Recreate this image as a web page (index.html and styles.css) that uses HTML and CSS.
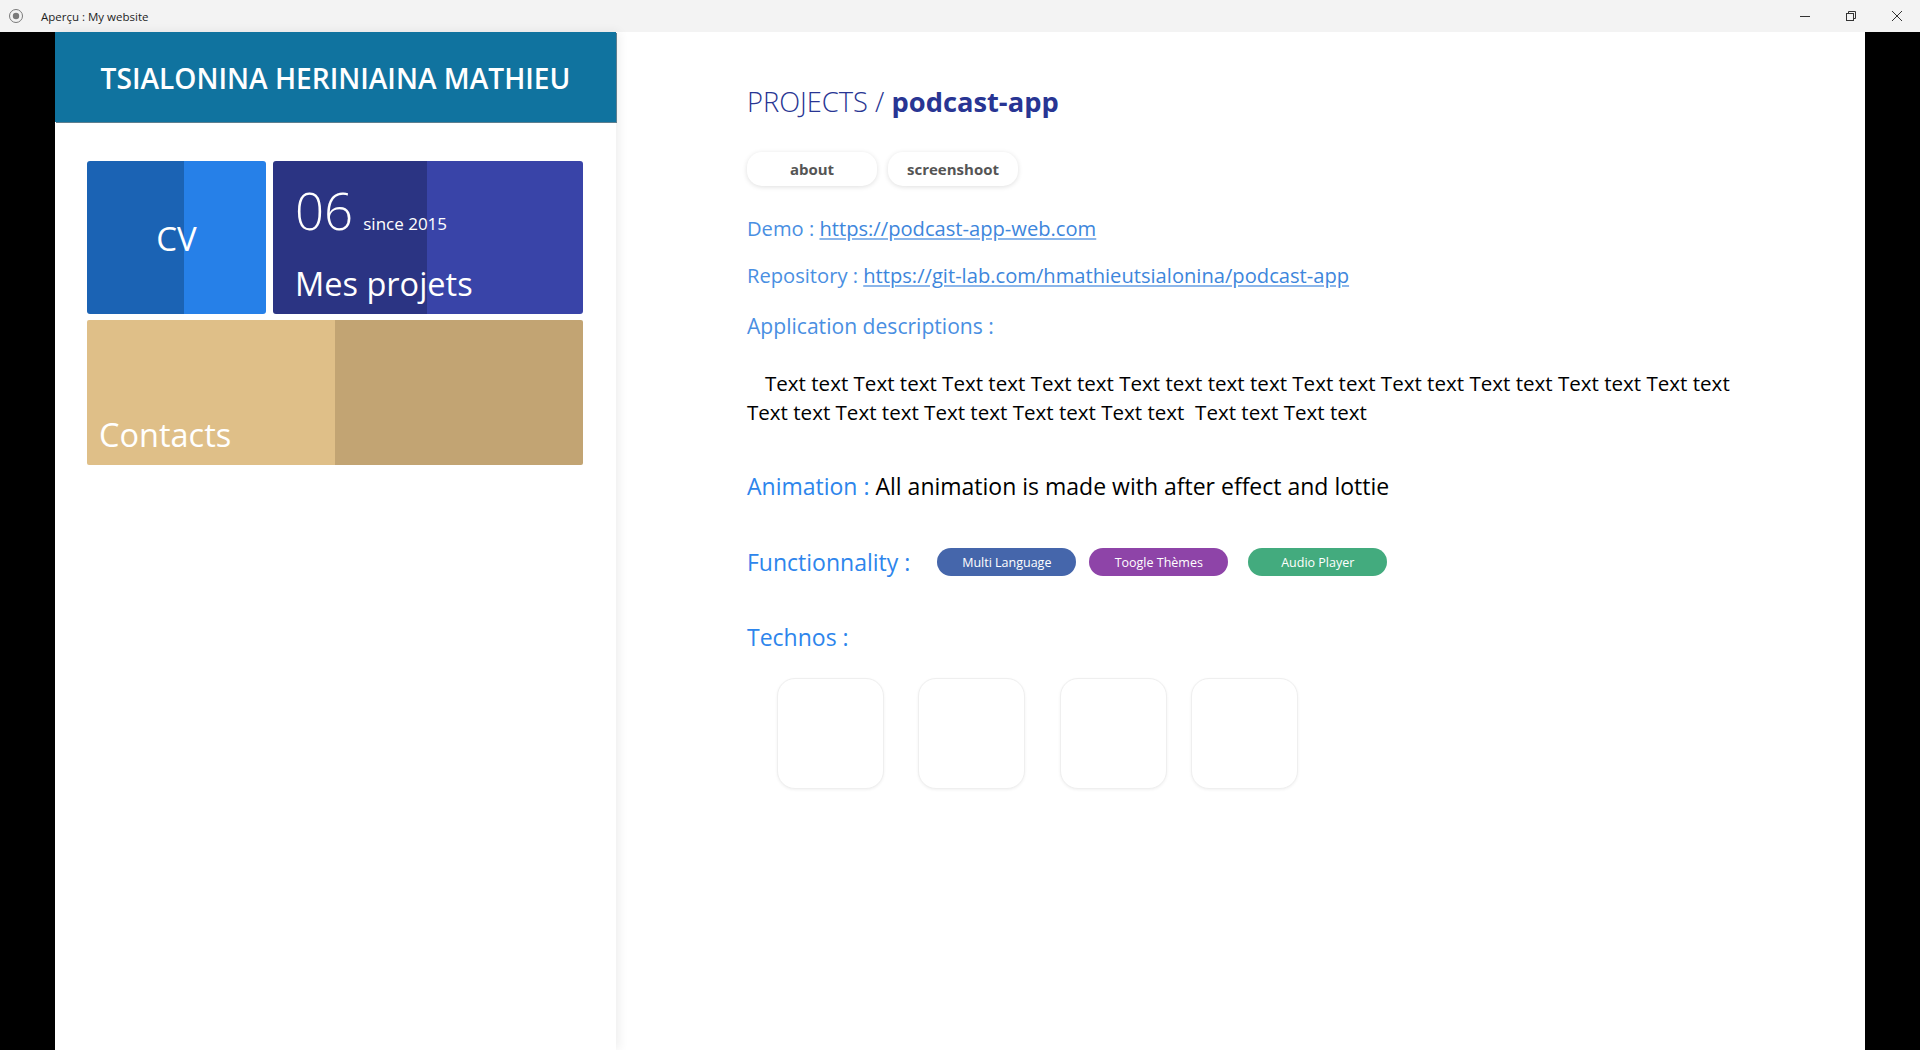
FILE: index.html
```html
<!DOCTYPE html>
<html lang="fr">
<head>
<meta charset="utf-8">
<title>Aperçu : My website</title>
<link rel="stylesheet" href="styles.css">
</head>
<body>
<div class="titlebar">
  <svg class="tb-icon" width="16" height="16" viewBox="0 0 16 16"><circle cx="8" cy="8" r="6.5" fill="none" stroke="#7a7a7a" stroke-width="1"/><circle cx="8" cy="8" r="3.2" fill="#7a7a7a"/></svg>
  <span class="tb-title">Aperçu : My website</span>
  <div class="tb-controls">
    <div class="tb-btn"><svg width="10" height="10" viewBox="0 0 10 10"><path d="M0 5.5H10" stroke="#333" stroke-width="1"/></svg></div>
    <div class="tb-btn"><svg width="10" height="10" viewBox="0 0 10 10"><rect x="0.5" y="2.5" width="7" height="7" fill="none" stroke="#333" stroke-width="1"/><path d="M2.5 2.5V0.5H9.5V7.5H7.5" fill="none" stroke="#333" stroke-width="1"/></svg></div>
    <div class="tb-btn"><svg width="10" height="10" viewBox="0 0 10 10"><path d="M0 0L10 10M10 0L0 10" stroke="#333" stroke-width="1"/></svg></div>
  </div>
</div>
<div class="frame">
  <aside class="sidebar">
    <header class="sb-header"><h1>TSIALONINA HERINIAINA MATHIEU</h1></header>
    <div class="tiles">
      <div class="tile tile-cv"><span>CV</span></div>
      <div class="tile tile-projects">
        <div class="count"><span class="num">06</span><span class="since">since 2015</span></div>
        <div class="tile-label">Mes projets</div>
      </div>
      <div class="tile tile-contacts"><div class="tile-label">Contacts</div></div>
    </div>
  </aside>
  <main class="content">
    <h2 class="crumb"><span class="crumb-light">PROJECTS / </span><strong>podcast-app</strong></h2>
    <div class="tabs">
      <button class="tab">about</button>
      <button class="tab">screenshoot</button>
    </div>
    <p class="line demo">Demo : <a href="#">https://podcast-app-web.com</a></p>
    <p class="line repo">Repository : <a href="#">https://git-lab.com/hmathieutsialonina/podcast-app</a></p>
    <p class="line desc-label">Application descriptions :</p>
    <p class="desc">Text text Text text Text text Text text Text text text text Text text Text text Text text Text text Text text Text text Text text Text text Text text Text text&nbsp; Text text Text text</p>
    <p class="big anim"><span class="lbl">Animation :</span> All animation is made with after effect and lottie</p>
    <div class="func">
      <span class="big lbl">Functionnality :</span>
      <span class="chip chip-blue">Multi Language</span>
      <span class="chip chip-purple">Toogle Thèmes</span>
      <span class="chip chip-green">Audio Player</span>
    </div>
    <p class="big lbl technos">Technos :</p>
    <div class="techs">
      <div class="tech"></div>
      <div class="tech"></div>
      <div class="tech"></div>
      <div class="tech"></div>
    </div>
  </main>
</div>
</body>
</html>
```
FILE: styles.css
```css
* { box-sizing: border-box; }
html, body { margin: 0; padding: 0; }
body {
  width: 1920px;
  height: 1050px;
  overflow: hidden;
  background: #000;
  font-family: "Open Sans", "Noto Sans", sans-serif;
}
p, h1, h2 { margin: 0; }

.titlebar {
  height: 32px;
  background: #f3f3f3;
  display: flex;
  align-items: center;
  padding-left: 8px;
}
.tb-icon { display: block; }
.tb-title {
  margin-left: 17px;
  font-size: 11.5px;
  color: #1e1e1e;
}
.tb-controls { margin-left: auto; display: flex; height: 32px; }
.tb-btn {
  width: 46px;
  height: 32px;
  display: flex;
  align-items: center;
  justify-content: center;
}
.tb-btn svg { display: block; }

.frame {
  display: flex;
  margin: 0 55px;
  height: 1018px;
  background: #fff;
}

.sidebar {
  width: 561px;
  flex: none;
  background: #fff;
  position: relative;
  z-index: 2;
  box-shadow: 3px 0 10px rgba(0,0,0,0.07);
}
.sb-header {
  height: 90px;
  background: #10739f;
  display: flex;
  align-items: center;
  justify-content: center;
  box-shadow: 1px 1px 0 #5e7f8f;
}
.sb-header h1 {
  color: #fff;
  font-weight: 600;
  font-size: 28.1px;
  line-height: 40px;
  margin-top: 2px;
}

.tiles {
  display: grid;
  grid-template-columns: 179px 310px;
  grid-template-rows: 153px 145px;
  column-gap: 7px;
  row-gap: 6px;
  margin: 39px 0 0 32px;
}
.tile {
  border-radius: 3px;
  color: #fff;
}
.tile-cv {
  background: linear-gradient(90deg, #1b63b4 0, #1b63b4 97px, #2680e8 97px);
  display: flex;
  align-items: center;
  justify-content: center;
  font-size: 33px;
}
.tile-cv span { margin-top: 2px; }
.tile-projects {
  background: linear-gradient(90deg, #2b3483 0, #2b3483 154px, #3944a8 154px);
  padding: 17px 0 0 22px;
}
.count { display: flex; align-items: baseline; height: 64px; }
.num { font-size: 51px; font-weight: 300; line-height: 64px; }
.since { font-size: 17px; margin-left: 10px; }
.tile-label { font-size: 32.5px; line-height: 44px; }
.tile-projects .tile-label { margin-top: 20px; }
.tile-contacts {
  grid-column: 1 / 3;
  background: linear-gradient(90deg, #dfbf88 0, #dfbf88 248px, #c2a473 248px);
  display: flex;
  align-items: flex-end;
  padding: 0 0 8px 12px;
  border-radius: 2px;
}

.content {
  flex: 1;
  padding: 52px 0 0 131px;
}
.crumb {
  font-size: 27.3px;
  line-height: 36px;
  color: #283593;
  font-weight: 400;
}
.crumb-light { font-weight: 300; }
.crumb strong { font-weight: 700; }

.tabs { display: flex; gap: 11px; margin-top: 32px; }
.tab {
  width: 130px;
  height: 34px;
  border: none;
  background: #fff;
  border-radius: 15px;
  box-shadow: 0 1px 5px rgba(0,0,0,0.13);
  font-family: inherit;
  font-weight: 700;
  font-size: 15px;
  color: #555;
  padding: 0;
}

.line {
  font-size: 20.15px;
  line-height: 28px;
  color: #4a8fe2;
}
.line a { color: #3d86dc; text-decoration: underline; text-decoration-color: #8bb6ea; text-underline-offset: 2px; }
.demo { margin-top: 28px; }
.repo { margin-top: 19px; }
.desc-label { margin-top: 23px; font-size: 21.1px; }

.desc {
  margin-top: 29px;
  width: 1010px;
  font-size: 20.55px;
  line-height: 29px;
  color: #000;
  text-indent: 18px;
}

.big { font-size: 23px; line-height: 32px; }
.lbl { color: #2d85ec; }
.anim { margin-top: 43px; color: #000; }

.func {
  margin-top: 44px;
  display: flex;
  align-items: center;
  height: 32px;
}
.chip {
  width: 139px;
  height: 28px;
  border-radius: 14px;
  color: #fff;
  font-size: 12.5px;
  display: flex;
  align-items: center;
  justify-content: center;
}
.chip-blue { background: #4566ab; margin-left: 27px; }
.chip-purple { background: #8e44a8; margin-left: 13px; }
.chip-green { background: #43ab7e; margin-left: 20px; }

.technos { margin-top: 43px; }

.techs {
  display: flex;
  margin: 25px 0 0 30px;
}
.tech {
  width: 107px;
  height: 111px;
  border-radius: 18px;
  background: #fff;
  border: 1px solid #efefef;
  box-shadow: 0 1px 3px rgba(0,0,0,0.06);
}
.tech + .tech { margin-left: 34px; }
.tech:nth-child(3) { margin-left: 35px; }
.tech:nth-child(4) { margin-left: 24px; }
```
